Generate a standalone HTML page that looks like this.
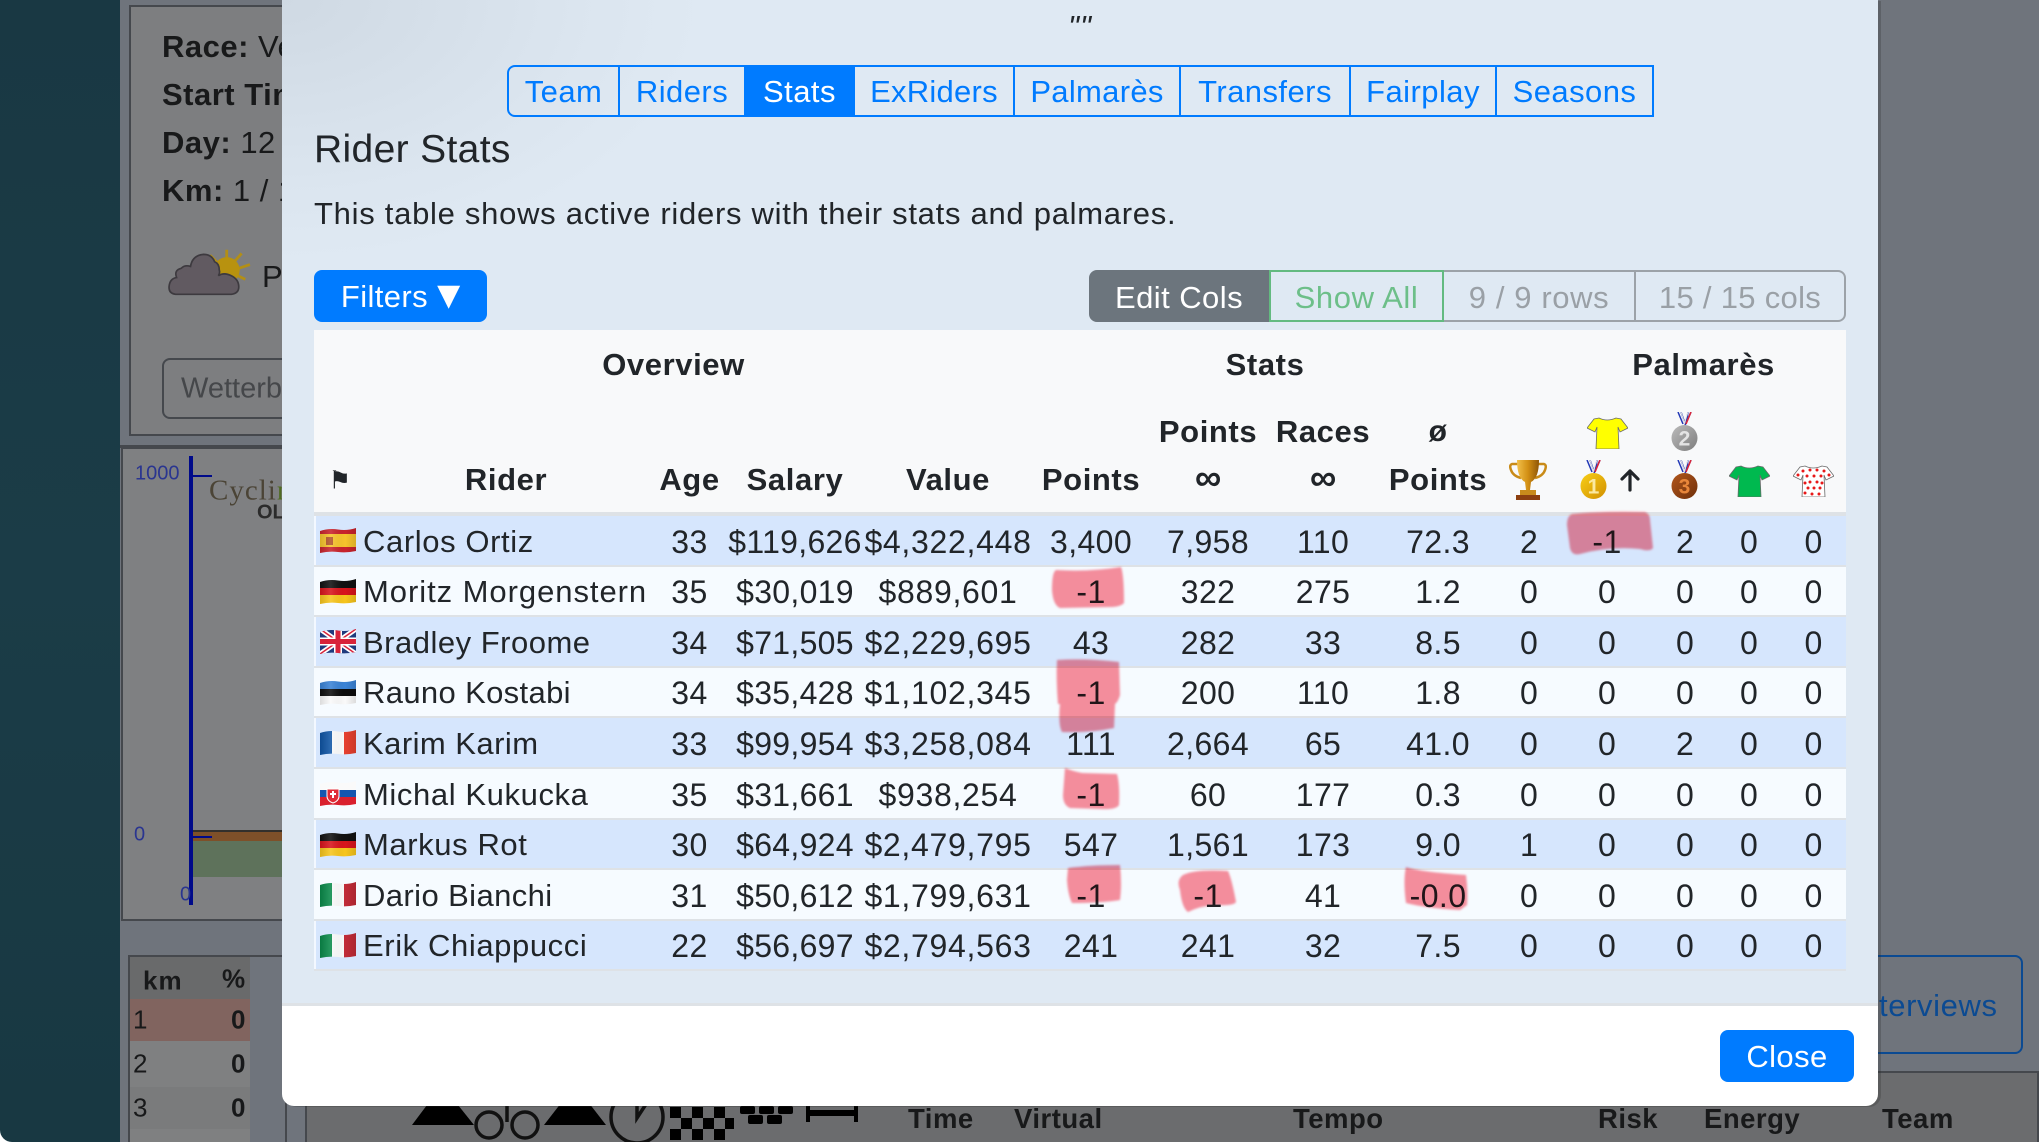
<!DOCTYPE html>
<html lang="en"><head><meta charset="utf-8"><title>Rider Stats</title>
<style>
html,body{margin:0;padding:0;width:2039px;height:1142px;overflow:hidden;background:#fff}
body{position:relative;font-family:"Liberation Sans",Arial,sans-serif;color:#212529;font-size:31px}
.a{position:absolute;white-space:nowrap}
.c{transform:translate(-50%,-50%)}
.m{transform:translateY(-50%)}
#teal{left:0;top:0;width:120px;height:1142px;background:linear-gradient(180deg,#193843,#1b3c47 50%,#183842);border-bottom-left-radius:12px}
#bg{left:120px;top:0;width:1919px;height:1142px;background:#6f747c}
.bk{color:#18191a;letter-spacing:.5px}
.bk b{font-weight:700}
.ft{font-size:27.5px;font-weight:700;top:1119px;letter-spacing:.5px}
#modal{left:282px;top:0;width:1596px;height:1106px;background:#fff;border-radius:0 0 12px 12px;box-shadow:3px 1px 0 rgba(40,40,40,.25);overflow:hidden}
#mbody{position:absolute;left:0;top:0;width:1596px;height:1003px;background:radial-gradient(ellipse 420px 260px at 0 0,#cfd9e3 0,#dbe5ef 70%,#dfe9f3 100%),#dfe9f3;background-color:#dfe9f3;border-bottom:3px solid #dee2e6}
.tab{position:absolute;top:65px;height:52px;box-sizing:border-box;border:2px solid #007bff;border-left-width:0;color:#007bff;text-align:center;line-height:50px;font-size:31px;letter-spacing:.45px}
.grp{position:absolute;top:270px;height:52px;box-sizing:border-box;text-align:center;line-height:51px;font-size:31px;letter-spacing:.6px}
table{position:absolute;left:32px;top:330px;width:1532px;border-collapse:separate;border-spacing:0;table-layout:fixed;font-size:32px}
thead th{background:#f8f9fa;font-weight:700;text-align:center;padding:0;font-size:31px;letter-spacing:.6px;vertical-align:middle;white-space:nowrap;position:relative}
tr.h3 th{border-bottom:4px solid #dee2e6;padding-bottom:8px}
.inf{font-size:37px;line-height:32px;display:inline-block;letter-spacing:0}
tbody td{padding:2px 0 0;text-align:center;border-bottom:2px solid #dee2e6;white-space:nowrap;line-height:30px;vertical-align:middle;letter-spacing:.4px}
tbody td:nth-child(3){letter-spacing:.3px}
tbody td:nth-child(4){letter-spacing:.7px}
tbody td.n{text-align:left;padding-left:49px;letter-spacing:.6px;position:relative;font-size:31px}
tr.o td{background:#d6e6fd}
tr.e td{background:#f6fbff}
tr.o td.n{box-shadow:inset 2px 0 0 #f3f8ff}
.f{position:absolute;left:6px;top:12px;width:36px;height:25px}
</style></head><body>
<svg width="0" height="0" style="position:absolute">
<defs>
<clipPath id="w"><path d="M0 3Q9 0 18 1.5T36 0V23Q27 25 18 24T0 25Z"/></clipPath>
<linearGradient id="sh" x1="0" x2="1" y1="0" y2="0"><stop offset="0" stop-color="#000" stop-opacity=".12"/><stop offset=".3" stop-color="#fff" stop-opacity=".12"/><stop offset=".7" stop-color="#000" stop-opacity="0"/><stop offset="1" stop-color="#000" stop-opacity=".12"/></linearGradient>
<symbol id="es" viewBox="0 0 36 25"><g clip-path="url(#w)"><rect width="36" height="25" fill="#c8232c"/><rect y="6" width="36" height="13" fill="#f6c42c"/><rect x="6" y="9" width="7" height="8" fill="#b5552a"/><rect width="36" height="25" fill="url(#sh)"/></g></symbol>
<symbol id="de" viewBox="0 0 36 25"><g clip-path="url(#w)"><rect width="36" height="9" fill="#111"/><rect y="9" width="36" height="8" fill="#d8141c"/><rect y="16" width="36" height="9" fill="#f7c51c"/><rect width="36" height="25" fill="url(#sh)"/></g></symbol>
<symbol id="gb" viewBox="0 0 36 25"><g clip-path="url(#w)"><rect width="36" height="25" fill="#1f3a7d"/><path d="M0 0L36 25M36 0L0 25" stroke="#fff" stroke-width="5"/><path d="M0 0L36 25M36 0L0 25" stroke="#d8233a" stroke-width="1.500"/><path d="M18 0V25M0 12.500H36" stroke="#fff" stroke-width="8"/><path d="M18 0V25M0 12.500H36" stroke="#d8233a" stroke-width="5"/></g></symbol>
<symbol id="ee" viewBox="0 0 36 25"><g clip-path="url(#w)"><rect width="36" height="10" fill="#3a83d6"/><rect y="9" width="36" height="8" fill="#0c0c0c"/><rect y="16" width="36" height="9" fill="#fafafa"/><rect width="36" height="25" fill="url(#sh)"/></g></symbol>
<symbol id="fr" viewBox="0 0 36 25"><g clip-path="url(#w)"><rect width="12" height="25" fill="#0f55a5"/><rect x="12" width="12" height="25" fill="#fafafa"/><rect x="24" width="12" height="25" fill="#e6402f"/><rect width="36" height="25" fill="url(#sh)"/></g></symbol>
<symbol id="sk" viewBox="0 0 36 25"><g clip-path="url(#w)"><rect width="36" height="10" fill="#fafafa"/><rect y="9" width="36" height="8" fill="#1556b0"/><rect y="16" width="36" height="9" fill="#d9202e"/><path d="M7 8H19V15Q19 20 13 22Q7 20 7 15Z" fill="#e02b36" stroke="#fff"/><rect x="12" y="10" width="2" height="7" fill="#fff"/><rect x="10" y="12" width="6" height="2" fill="#fff"/></g></symbol>
<symbol id="it" viewBox="0 0 36 25"><g clip-path="url(#w)"><rect width="12" height="25" fill="#0a8a4a"/><rect x="12" width="12" height="25" fill="#fafafa"/><rect x="24" width="12" height="25" fill="#c12b37"/><rect width="36" height="25" fill="url(#sh)"/></g></symbol>
<symbol id="shirt" viewBox="0 0 41 32"><path d="M12 1Q20 5 29 1L34 2L41 11L33 15L31 10L32 32L9 32L10 10L8 15L0 11L7 2Z" stroke="#6a6a6a" stroke-width=".8"/></symbol>
<linearGradient id="g1" x1="0" x2="1" y1="0" y2="1"><stop offset="0" stop-color="#f8cf18"/><stop offset="1" stop-color="#d18f00"/></linearGradient>
<linearGradient id="g2" x1="0" x2="1" y1="0" y2="1"><stop offset="0" stop-color="#bbb"/><stop offset="1" stop-color="#7d7d7d"/></linearGradient>
<linearGradient id="g3" x1="0" x2="1" y1="0" y2="1"><stop offset="0" stop-color="#b2571c"/><stop offset="1" stop-color="#6f2f0a"/></linearGradient>
<linearGradient id="gt" x1="0" x2="1" y1="0" y2="0"><stop offset="0" stop-color="#f2c04a"/><stop offset=".5" stop-color="#d28f14"/><stop offset="1" stop-color="#8f5608"/></linearGradient>
<symbol id="rib" viewBox="0 0 27 39"><path d="M7 0L12 12M10 0L13.500 10M17 0L15 12M20 0L14 13" fill="none" stroke="#2238b6" stroke-width="1.500"/><path d="M10 0L13.500 11M17 0L13.500 11" stroke="#e3e3e3" stroke-width="1" fill="none"/><path d="M20 0L15 12" stroke="#d8263a" stroke-width="1.600"/></symbol>
</defs></svg>

<div class="a" id="bg"></div>
<div class="a" id="teal"></div>

<!-- background page: info panel -->
<div class="a" style="left:129px;top:5px;width:300px;height:431px;background:#7d7e80;border:2px solid #45484d;box-sizing:border-box"></div>
<div class="a" style="left:120px;top:445px;width:300px;height:3px;background:#45484d"></div>
<div class="a m bk" style="left:162px;top:47px"><b>Race:</b> Ve</div>
<div class="a m bk" style="left:162px;top:95px"><b>Start Time</b></div>
<div class="a m bk" style="left:162px;top:143px"><b>Day:</b> 12 /</div>
<div class="a m bk" style="left:162px;top:191px"><b>Km:</b> 1 / 1</div>
<svg class="a" style="left:168px;top:246px" width="84" height="52" viewBox="0 0 90 56">
<g stroke="#b38f15" stroke-width="3"><path d="M63 4V14M45 10L53 18M79 8L72 16M88 20L76 24M83 36L73 31"/></g>
<circle cx="63" cy="26" r="14" fill="#b8920f"/>
<path d="M8 52Q0 51 1 43Q2 35 9 34Q6 26 14 24Q18 20 24 22Q26 10 38 9Q47 9 50 17Q55 19 55 26Q56 29 54 32Q60 28 68 32Q76 36 76 44Q76 51 68 52Z" fill="#615a61" stroke="#3d3a3f" stroke-width="1.800"/>
</svg>
<div class="a m bk" style="left:262px;top:277px;font-size:31px">P</div>
<div class="a" style="left:162px;top:358px;width:200px;height:61px;box-sizing:border-box;border:2px solid #45484d;border-radius:8px"></div>
<div class="a m" style="left:181px;top:389px;color:#45474a;font-size:29px">Wetterb</div>

<!-- chart -->
<div class="a" style="left:121px;top:447px;width:300px;height:474px;background:#7f8082;border:2px solid #45484d;box-sizing:border-box"></div>
<div class="a" style="left:193px;top:830px;width:200px;height:11px;background:#7e5029;border-top:2px solid #33302c;box-sizing:border-box"></div>
<div class="a" style="left:193px;top:841px;width:200px;height:36px;background:#5e725b"></div>
<div class="a" style="left:189px;top:456px;width:4px;height:449px;background:#000a8a"></div>
<div class="a" style="left:193px;top:475px;width:19px;height:2px;background:#000a8a"></div>
<div class="a" style="left:193px;top:836px;width:19px;height:2px;background:#000a8a"></div>
<div class="a m" style="left:135px;top:474px;font-size:20px;color:#2a3590">1000</div>
<div class="a m" style="left:134px;top:835px;font-size:20px;color:#2a3590">0</div>
<div class="a m" style="left:180px;top:895px;font-size:20px;color:#2a3590">0</div>
<div class="a m" style="left:209px;top:491px;font-family:'Liberation Serif',serif;font-size:29px;color:#4b4436;letter-spacing:1px">Cycli<span style="color:#4f6b22">ng</span></div>
<div class="a m" style="left:257px;top:513px;font-size:20px;font-weight:700;color:#2b2b2b">OL</div>

<!-- km table -->
<div class="a" style="left:128px;top:955px;width:159px;height:190px;border:2px solid #45484d;box-sizing:border-box"></div>
<div class="a" style="left:130px;top:957px;width:120px;height:42px;background:#696a6b"></div>
<div class="a" style="left:130px;top:999px;width:120px;height:42px;background:#81645f"></div>
<div class="a" style="left:130px;top:1041px;width:120px;height:46px;background:#7f8081"></div>
<div class="a" style="left:130px;top:1087px;width:120px;height:42px;background:#7a7b7c"></div>
<div class="a" style="left:130px;top:1129px;width:120px;height:13px;background:#7f8081"></div>
<div class="a m bk" style="left:143px;top:981px;font-size:26px;font-weight:700;letter-spacing:1px">km</div>
<div class="a m bk" style="left:222px;top:979px;font-size:26px;font-weight:700">%</div>
<div class="a m bk" style="left:133px;top:1020px;font-size:26px">1</div><div class="a m bk" style="left:231px;top:1020px;font-size:26px;font-weight:700">0</div>
<div class="a m bk" style="left:133px;top:1064px;font-size:26px">2</div><div class="a m bk" style="left:231px;top:1064px;font-size:26px;font-weight:700">0</div>
<div class="a m bk" style="left:133px;top:1108px;font-size:26px">3</div><div class="a m bk" style="left:231px;top:1108px;font-size:26px;font-weight:700">0</div>

<!-- bottom strip -->
<div class="a" style="left:305px;top:1071px;width:1734px;height:71px;background:#6b6c6e;border-top:2px solid #45484d;border-left:2px solid #45484d;border-right:2px solid #45484d;box-sizing:border-box"></div>
<svg class="a" style="left:405px;top:1090px" width="460" height="52" viewBox="405 1090 460 52">
<path d="M442 1085L474 1125H412Z"/><path d="M575 1085L606 1125H544Z"/>
<g fill="none" stroke="#111" stroke-width="3.500"><circle cx="489" cy="1125" r="13"/><circle cx="525" cy="1125" r="13"/><path d="M507 1106V1122"/><circle cx="637" cy="1117" r="26"/><path d="M637 1096V1118L650 1098"/></g>
<g fill="#000"><rect x="670" y="1107" width="11" height="11"/><rect x="692" y="1107" width="11" height="11"/><rect x="714" y="1107" width="11" height="11"/><rect x="681" y="1118" width="11" height="11"/><rect x="703" y="1118" width="11" height="11"/><rect x="725" y="1118" width="9" height="11"/><rect x="670" y="1129" width="11" height="11"/><rect x="692" y="1129" width="11" height="11"/><rect x="714" y="1129" width="11" height="11"/>
<rect x="740" y="1106" width="15" height="8" rx="2"/><rect x="759" y="1106" width="15" height="8" rx="2"/><rect x="778" y="1106" width="15" height="8" rx="2"/><rect x="748" y="1115" width="15" height="9" rx="2"/><rect x="767" y="1115" width="15" height="9" rx="2"/>
<path d="M806 1100H810V1110H854V1100H858V1122H854V1116H810V1122H806Z"/><rect x="814" y="1103" width="36" height="3"/></g></svg>
<div class="a m bk ft" style="left:908px">Time</div>
<div class="a m bk ft" style="left:1014px">Virtual</div>
<div class="a m bk ft" style="left:1293px">Tempo</div>
<div class="a m bk ft" style="left:1598px">Risk</div>
<div class="a m bk ft" style="left:1704px">Energy</div>
<div class="a m bk ft" style="left:1882px">Team</div>
<div class="a" style="left:1700px;top:955px;width:323px;height:99px;border:2px solid #0b4a92;border-radius:8px;box-sizing:border-box"></div>
<div class="a m" style="left:1852px;top:1006px;color:#0b4a92;font-size:31px;letter-spacing:.6px">Interviews</div>

<!-- modal -->
<div class="a" id="modal">
<div id="mbody"></div>
<div class="a c" style="left:798px;top:27px;font-size:31px;font-style:italic;letter-spacing:1px">""</div>

<div class="tab" style="left:225px;width:113px;border-left-width:2px;border-radius:8px 0 0 8px">Team</div>
<div class="tab" style="left:338px;width:126px">Riders</div>
<div class="tab" style="left:464px;width:109px;background:#007bff;color:#fff">Stats</div>
<div class="tab" style="left:573px;width:160px;letter-spacing:.25px">ExRiders</div>
<div class="tab" style="left:733px;width:166px;letter-spacing:.3px">Palmarès</div>
<div class="tab" style="left:899px;width:170px">Transfers</div>
<div class="tab" style="left:1069px;width:146px">Fairplay</div>
<div class="tab" style="left:1215px;width:157px">Seasons</div>

<div class="a m" style="left:32px;top:150px;font-size:39px;letter-spacing:.35px">Rider Stats</div>
<div class="a m" style="left:32px;top:214px;font-size:31px;letter-spacing:.72px" id="intro">This table shows active riders with their stats and palmares.</div>

<div class="a" style="left:32px;top:270px;width:173px;height:52px;background:#007bff;border-radius:8px;color:#fff;text-align:center;line-height:54px;font-size:31px;letter-spacing:.4px">Filters <span style="font-family:'DejaVu Sans',sans-serif;font-size:30px;letter-spacing:0;line-height:30px;display:inline-block;position:relative;top:-2px">▼</span></div>

<div class="grp" style="left:807px;width:180px;background:#6c757d;color:#fff;border:2px solid #6c757d;border-radius:8px 0 0 8px;letter-spacing:.45px">Edit Cols</div>
<div class="grp" style="left:987px;width:175px;border:2px solid #63ba80;color:#6dbf89">Show All</div>
<div class="grp" style="left:1162px;width:192px;border:2px solid #9ca2a8;border-left:0;color:#9aa0a6">9 / 9 rows</div>
<div class="grp" style="left:1354px;width:210px;border:2px solid #9ca2a8;border-left:0;border-radius:0 8px 8px 0;color:#9aa0a6;letter-spacing:.3px">15 / 15 cols</div>

<table>
<colgroup><col style="width:338px"><col style="width:75px"><col style="width:136px"><col style="width:170px"><col style="width:116px"><col style="width:118px"><col style="width:112px"><col style="width:118px"><col style="width:64px"><col style="width:92px"><col style="width:64px"><col style="width:64px"><col style="width:65px"></colgroup>
<thead>
<tr style="height:70px"><th colspan="4">Overview</th><th colspan="4">Stats</th><th></th><th colspan="4">Palmarès</th></tr>
<tr style="height:56px"><th colspan="5"></th><th style="padding-top:8px">Points</th><th style="padding-top:8px">Races</th><th style="font-size:30px;padding-top:8px">ø</th><th colspan="5"></th></tr>
<tr class="h3" style="height:60px"><th style="padding-left:46px"><span class="a c" style="left:26px;top:24px;font-family:'DejaVu Sans',sans-serif;font-size:25px;font-weight:400;letter-spacing:0">⚑</span>Rider</th>
<th>Age</th><th>Salary</th><th>Value</th><th>Points</th><th><span class="inf">∞</span></th><th><span class="inf">∞</span></th><th>Points</th><th colspan="5"></th></tr>
</thead>
<tbody>
<tr class="o" style="height:51px"><td class="n"><svg class="f"><use href="#es"/></svg>Carlos Ortiz</td><td>33</td><td>$119,626</td><td>$4,322,448</td><td>3,400</td><td>7,958</td><td>110</td><td>72.3</td><td>2</td><td>-1</td><td>2</td><td>0</td><td>0</td></tr>
<tr class="e" style="height:50px"><td class="n" style="letter-spacing:.95px"><svg class="f"><use href="#de"/></svg>Moritz Morgenstern</td><td>35</td><td>$30,019</td><td>$889,601</td><td>-1</td><td>322</td><td>275</td><td>1.2</td><td>0</td><td>0</td><td>0</td><td>0</td><td>0</td></tr>
<tr class="o" style="height:51px"><td class="n" style="letter-spacing:.5px"><svg class="f"><use href="#gb"/></svg>Bradley Froome</td><td>34</td><td>$71,505</td><td>$2,229,695</td><td>43</td><td>282</td><td>33</td><td>8.5</td><td>0</td><td>0</td><td>0</td><td>0</td><td>0</td></tr>
<tr class="e" style="height:50px"><td class="n" style="letter-spacing:.35px"><svg class="f"><use href="#ee"/></svg>Rauno Kostabi</td><td>34</td><td>$35,428</td><td>$1,102,345</td><td>-1</td><td>200</td><td>110</td><td>1.8</td><td>0</td><td>0</td><td>0</td><td>0</td><td>0</td></tr>
<tr class="o" style="height:51px"><td class="n" style="letter-spacing:.45px"><svg class="f"><use href="#fr"/></svg>Karim Karim</td><td>33</td><td>$99,954</td><td>$3,258,084</td><td>111</td><td>2,664</td><td>65</td><td>41.0</td><td>0</td><td>0</td><td>2</td><td>0</td><td>0</td></tr>
<tr class="e" style="height:51px"><td class="n"><svg class="f"><use href="#sk"/></svg>Michal Kukucka</td><td>35</td><td>$31,661</td><td>$938,254</td><td>-1</td><td>60</td><td>177</td><td>0.3</td><td>0</td><td>0</td><td>0</td><td>0</td><td>0</td></tr>
<tr class="o" style="height:50px"><td class="n"><svg class="f"><use href="#de"/></svg>Markus Rot</td><td>30</td><td>$64,924</td><td>$2,479,795</td><td>547</td><td>1,561</td><td>173</td><td>9.0</td><td>1</td><td>0</td><td>0</td><td>0</td><td>0</td></tr>
<tr class="e" style="height:51px"><td class="n" style="letter-spacing:.4px"><svg class="f"><use href="#it"/></svg>Dario Bianchi</td><td>31</td><td>$50,612</td><td>$1,799,631</td><td>-1</td><td>-1</td><td>41</td><td>-0.0</td><td>0</td><td>0</td><td>0</td><td>0</td><td>0</td></tr>
<tr class="o" style="height:50px"><td class="n"><svg class="f"><use href="#it"/></svg>Erik Chiappucci</td><td>22</td><td>$56,697</td><td>$2,794,563</td><td>241</td><td>241</td><td>32</td><td>7.5</td><td>0</td><td>0</td><td>0</td><td>0</td><td>0</td></tr>
</tbody></table>

<div class="a" style="left:1438px;top:1030px;width:134px;height:52px;background:#007bff;border-radius:8px;color:#fff;text-align:center;line-height:54px;font-size:31px;letter-spacing:.4px">Close</div>
</div>

<!-- header icons -->
<svg class="a" style="left:1509px;top:460px" width="38" height="40" viewBox="0 0 38 40">
<path d="M9 4H3Q0 5 2 10Q4 16 12 18M29 4H35Q38 5 36 10Q34 16 26 18" fill="none" stroke="#c98b18" stroke-width="2.500"/>
<path d="M8 0H30Q30 18 22 22L21 30H17L16 22Q8 18 8 0Z" fill="url(#gt)"/>
<rect x="11" y="30" width="16" height="5" fill="#c88a1c"/><rect x="7" y="35" width="24" height="5" fill="#8c3f10"/></svg>
<svg class="a" style="left:1587px;top:417px" width="41" height="32"><use href="#shirt" fill="#ffff00"/></svg>
<svg class="a" style="left:1729px;top:465px" width="41" height="32"><use href="#shirt" fill="#00b94f"/></svg>
<svg class="a" style="left:1793px;top:465px" width="41" height="32"><use href="#shirt" fill="#fff"/><g fill="#e81818"><circle cx="10" cy="6" r="1.500"/><circle cx="17" cy="5" r="1.500"/><circle cx="24" cy="5" r="1.500"/><circle cx="31" cy="6" r="1.500"/><circle cx="5" cy="10" r="1.500"/><circle cx="36" cy="10" r="1.500"/><circle cx="14" cy="11" r="1.500"/><circle cx="21" cy="11" r="1.500"/><circle cx="28" cy="11" r="1.500"/><circle cx="17" cy="17" r="1.500"/><circle cx="24" cy="17" r="1.500"/><circle cx="12" cy="18" r="1.500"/><circle cx="29" cy="18" r="1.500"/><circle cx="15" cy="23" r="1.500"/><circle cx="21" cy="23" r="1.500"/><circle cx="27" cy="23" r="1.500"/><circle cx="12" cy="28" r="1.500"/><circle cx="19" cy="29" r="1.500"/><circle cx="26" cy="29" r="1.500"/></g></svg>
<svg class="a" style="left:1580px;top:460px" width="27" height="39"><use href="#rib" width="27" height="39"/><circle cx="13.500" cy="26" r="13" fill="url(#g1)"/><text x="13.500" y="33.500" text-anchor="middle" font-family="Liberation Sans" font-weight="700" font-size="21" fill="#fbe9a0">1</text></svg>
<svg class="a" style="left:1671px;top:412px" width="27" height="39"><use href="#rib" width="27" height="39"/><circle cx="13.500" cy="26" r="13" fill="url(#g2)"/><text x="13.500" y="33.500" text-anchor="middle" font-family="Liberation Sans" font-weight="700" font-size="21" fill="#e4e4e4">2</text></svg>
<svg class="a" style="left:1671px;top:460px" width="27" height="39"><use href="#rib" width="27" height="39"/><circle cx="13.500" cy="26" r="13" fill="url(#g3)"/><text x="13.500" y="33.500" text-anchor="middle" font-family="Liberation Sans" font-weight="700" font-size="21" fill="#e8863a">3</text></svg>
<svg class="a" style="left:1620px;top:468px" width="20" height="24" viewBox="0 0 20 24"><path d="M10 22V3M2 11L10 3L18 11" fill="none" stroke="#212529" stroke-width="3.200" stroke-linecap="round" stroke-linejoin="round"/></svg>

<!-- marker blobs -->
<svg class="a" style="left:0;top:0;mix-blend-mode:multiply;pointer-events:none" width="2039" height="1142">
<defs><filter id="bl"><feGaussianBlur stdDeviation="1"/></filter></defs>
<g fill="#fc8f9c" filter="url(#bl)">
<path d="M1572 514Q1600 511 1645 512Q1650 514 1650 520L1653 548Q1650 552 1640 549Q1610 546 1580 554Q1572 556 1570 548L1567 525Q1567 516 1572 514Z"/>
<path d="M1056 570Q1090 572 1121 567Q1124 575 1124 603Q1120 607 1110 607L1060 608Q1053 605 1052 590Q1052 572 1056 570Z"/>
<path d="M1057 660Q1085 658 1119 662L1120 695Q1118 702 1115 704H1058Q1056 680 1057 660Z"/>
<path d="M1060 704H1115L1114 728Q1090 733 1062 732Q1058 725 1060 704Z"/>
<path d="M1065 768Q1072 771 1082 773L1117 774Q1120 785 1119 805Q1116 810 1100 809L1070 808Q1063 805 1063 795Z"/>
<path d="M1068 868Q1090 865 1120 865Q1122 885 1120 900Q1100 903 1072 903Q1068 895 1067 880Z"/>
<path d="M1183 875Q1195 869 1228 871Q1232 880 1236 902Q1234 906 1215 905Q1200 906 1188 912Q1182 908 1180 890Q1176 880 1183 875Z"/>
<path d="M1406 867Q1420 872 1466 875Q1468 890 1467 905L1460 910Q1425 908 1406 903Q1403 880 1406 867Z"/>
</g></svg>
</body></html>
